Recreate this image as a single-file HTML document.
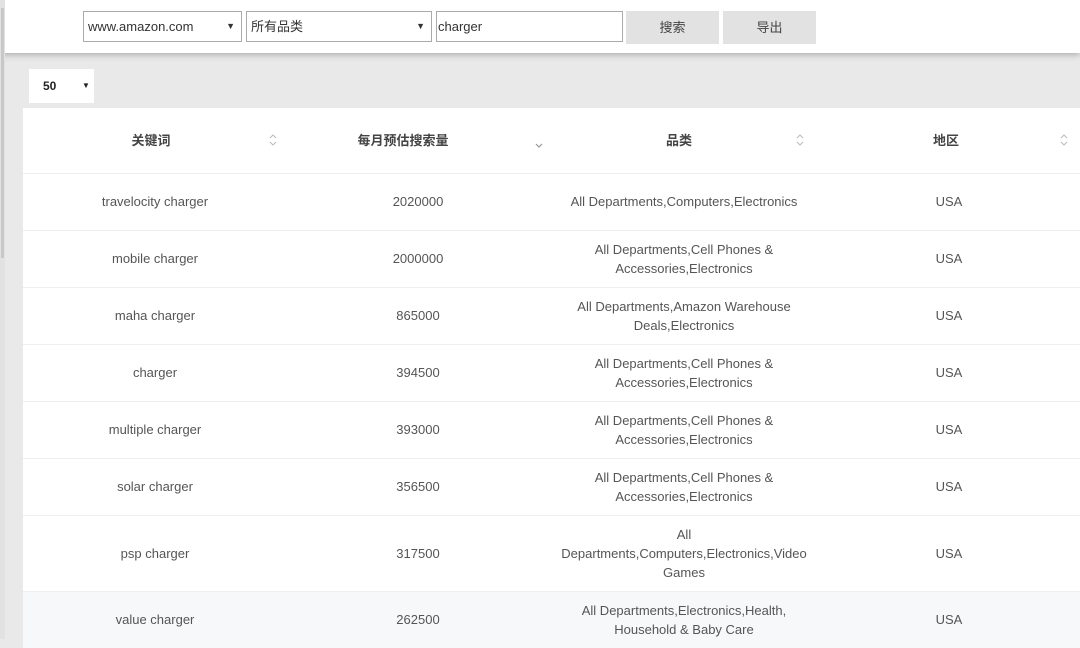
<!DOCTYPE html>
<html><head><meta charset="utf-8"><style>
*{margin:0;padding:0;box-sizing:border-box}
body{width:1080px;height:639px;overflow:hidden;background:#e9e9e9;font-family:"Liberation Sans","Noto Sans CJK SC",sans-serif;color:#555;font-size:13px;position:relative}
.top{position:absolute;left:0;top:0;width:1080px;height:53px;background:#fff;box-shadow:0 2px 6px rgba(0,0,0,.25);z-index:2}
.lbar{position:absolute;left:0;top:0;width:5px;height:639px;background:#e2e2e2;z-index:3}
.lbar i{position:absolute;left:1px;top:8px;width:3px;height:250px;background:#c8c8c8}
.sel{position:absolute;top:11px;height:31px;border:1px solid #aaa;background:#fff;font-size:13px;color:#333;line-height:29px;padding-left:4px}
.sel b{position:absolute;right:6px;top:0;font-size:9px;font-weight:normal}
.btn{position:absolute;top:11px;height:33px;background:#e2e2e2;text-align:center;line-height:33px;font-size:13px;color:#444}
.pg{position:absolute;left:29px;top:69px;width:65px;height:34px;background:#fff;font-size:12px;font-weight:bold;color:#222;line-height:34px;padding-left:14px}
.pg b{position:absolute;left:53px;font-size:8px}
table{position:absolute;left:23px;top:108px;width:1070px;border-collapse:collapse;background:#fff}
td,th{text-align:center;border-top:1px solid #eee;line-height:19px;font-weight:normal;position:relative}
th{height:65px;font-size:13px;color:#444;border-top:none;font-weight:bold}
td{height:57px}
.s{position:absolute;top:25px;width:10px;height:14px}
</style></head><body>
<div class="lbar"><i></i></div>
<div class="top">
<div class="sel" style="left:83px;width:159px">www.amazon.com<b>▼</b></div>
<div class="sel" style="left:246px;width:186px">所有品类<b>▼</b></div>
<div class="sel" style="left:436px;width:187px;padding-left:1px">charger</div>
<div class="btn" style="left:626px;width:93px">搜索</div>
<div class="btn" style="left:723px;width:93px">导出</div>
</div>
<div class="pg">50<b>▼</b></div>
<table>
<colgroup><col style="width:264px"><col style="width:262px"><col style="width:270px"><col style="width:274px"></colgroup>
<tr><th style="padding-right:8px">关键词<svg class="s" style="left:245px" viewBox="0 0 10 14"><path d="M2 5L5 2L8 5M2 9L5 12L8 9" fill="none" stroke="#bbb" stroke-width="1"/></svg></th><th style="padding-right:30px">每月预估搜索量<svg class="s" style="left:247px;top:28px" viewBox="0 0 10 14"><path d="M2 8L5 11L8 8" fill="none" stroke="#999" stroke-width="1.2"/></svg></th><th style="padding-right:10px">品类<svg class="s" style="left:246px" viewBox="0 0 10 14"><path d="M2 5L5 2L8 5M2 9L5 12L8 9" fill="none" stroke="#bbb" stroke-width="1"/></svg></th><th style="padding-right:20px">地区<svg class="s" style="left:240px" viewBox="0 0 10 14"><path d="M2 5L5 2L8 5M2 9L5 12L8 9" fill="none" stroke="#bbb" stroke-width="1"/></svg></th></tr>
<tr><td>travelocity charger</td><td>2020000</td><td>All Departments,Computers,Electronics</td><td style="padding-right:14px">USA</td></tr>
<tr><td>mobile charger</td><td>2000000</td><td>All Departments,Cell Phones &amp;<br>Accessories,Electronics</td><td style="padding-right:14px">USA</td></tr>
<tr><td>maha charger</td><td>865000</td><td>All Departments,Amazon Warehouse<br>Deals,Electronics</td><td style="padding-right:14px">USA</td></tr>
<tr><td>charger</td><td>394500</td><td>All Departments,Cell Phones &amp;<br>Accessories,Electronics</td><td style="padding-right:14px">USA</td></tr>
<tr><td>multiple charger</td><td>393000</td><td>All Departments,Cell Phones &amp;<br>Accessories,Electronics</td><td style="padding-right:14px">USA</td></tr>
<tr><td>solar charger</td><td>356500</td><td>All Departments,Cell Phones &amp;<br>Accessories,Electronics</td><td style="padding-right:14px">USA</td></tr>
<tr><td style="height:76px">psp charger</td><td>317500</td><td>All<br>Departments,Computers,Electronics,Video<br>Games</td><td style="padding-right:14px">USA</td></tr>
<tr style="background:#f7f8fa"><td>value charger</td><td>262500</td><td>All Departments,Electronics,Health,<br>Household &amp; Baby Care</td><td style="padding-right:14px">USA</td></tr>
</table>
</body></html>
